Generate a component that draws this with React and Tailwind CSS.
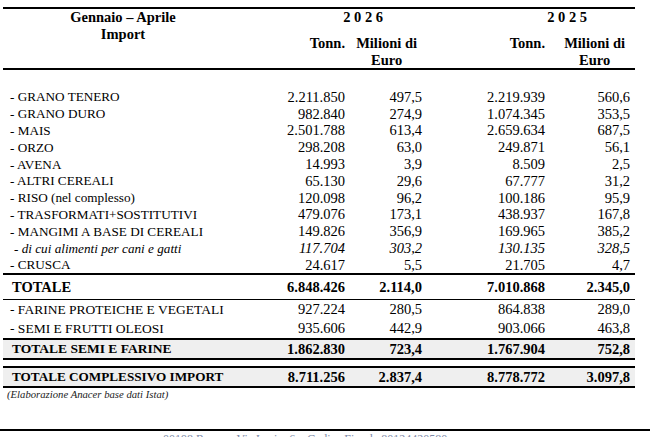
const rows = [
  ['- GRANO TENERO', '2.211.850', '497,5', '2.219.939', '560,6'],
  ['- GRANO DURO', '982.840', '274,9', '1.074.345', '353,5'],
  ['- MAIS', '2.501.788', '613,4', '2.659.634', '687,5'],
  ['- ORZO', '298.208', '63,0', '249.871', '56,1'],
  ['- AVENA', '14.993', '3,9', '8.509', '2,5'],
  ['- ALTRI CEREALI', '65.130', '29,6', '67.777', '31,2'],
  ['- RISO (nel complesso)', '120.098', '96,2', '100.186', '95,9'],
  ['- TRASFORMATI+SOSTITUTIVI', '479.076', '173,1', '438.937', '167,8'],
  ['- MANGIMI A BASE DI CEREALI', '149.826', '356,9', '169.965', '385,2'],
  ['- di cui alimenti per cani e gatti', '117.704', '303,2', '130.135', '328,5', true],
  ['- CRUSCA', '24.617', '5,5', '21.705', '4,7'],
];

const cols = 'grid grid-cols-[251px_91px_77px_123px_90px]';
const numCols = 'col-span-4 grid grid-cols-[91px_77px_123px_90px] text-[14.5px]';

function Nums({ v }) {
  return (
    <>
      <div className="text-right">{v[0]}</div>
      <div className="text-right">{v[1]}</div>
      <div className="text-right">{v[2]}</div>
      <div className="text-right pr-[5px]">{v[3]}</div>
    </>
  );
}

export default function App() {
  return (
    <div className="relative h-[437px] w-[657px] overflow-hidden bg-white text-black font-['Liberation_Serif',serif] pt-[7px]">
      <div className="ml-[3px] w-[632px]">
        {/* intestazione */}
        <div className={`${cols} h-[63px] border-y-2 border-black font-bold text-[14.5px] leading-[17px]`}>
          <div className="w-[240px] text-center">
            Gennaio – Aprile
            <br />
            Import
          </div>
          <div className="col-span-2">
            <div className="text-right pr-[39px]">2 0 2 6</div>
            <div className="mt-[9px] grid grid-cols-[91px_77px]">
              <div className="text-right">Tonn.</div>
              <div className="text-right pr-[5px]">
                <div className="inline-block text-center">Milioni di<br />Euro</div>
              </div>
            </div>
          </div>
          <div className="col-span-2">
            <div className="text-right pr-[48px]">2 0 2 5</div>
            <div className="mt-[9px] grid grid-cols-[123px_90px]">
              <div className="text-right">Tonn.</div>
              <div className="text-right pr-[10px]">
                <div className="inline-block text-center">Milioni di<br />Euro</div>
              </div>
            </div>
          </div>
        </div>

        <div className="h-[18.6px]" />

        {rows.map((r) => (
          <div key={r[0]} className={`${cols} h-[16.8px] items-center leading-none ${r[5] ? 'italic' : ''}`}>
            <div className={`text-[13.2px] ${r[5] ? 'pl-[11px]' : 'pl-[7px]'}`}>{r[0]}</div>
            <div className={numCols}>
              <Nums v={r.slice(1, 5)} />
            </div>
          </div>
        ))}

        <div className={`${cols} h-[26.6px] items-center border-t-2 border-b border-black font-bold text-[14.5px] leading-none`}>
          <div className="pl-[9px]">TOTALE</div>
          <Nums v={['6.848.426', '2.114,0', '7.010.868', '2.345,0']} />
        </div>

        <div className={`${cols} h-[19px] items-center leading-none`}>
          <div className="pl-[7px] text-[13.5px]">- FARINE PROTEICHE E VEGETALI</div>
          <div className={numCols}>
            <Nums v={['927.224', '280,5', '864.838', '289,0']} />
          </div>
        </div>
        <div className={`${cols} h-[19px] items-center leading-none`}>
          <div className="pl-[7px] text-[13.5px]">- SEMI E FRUTTI OLEOSI</div>
          <div className={numCols}>
            <Nums v={['935.606', '442,9', '903.066', '463,8']} />
          </div>
        </div>

        <div className={`${cols} h-[22px] items-center border-y-2 border-black bg-[#efefef] font-bold leading-none`}>
          <div className="pl-[9px] text-[13.5px]">TOTALE SEMI E FARINE</div>
          <div className={numCols}>
            <Nums v={['1.862.830', '723,4', '1.767.904', '752,8']} />
          </div>
        </div>

        <div className="h-[6px]" />

        <div className={`${cols} h-[22px] items-center border-y-2 border-black bg-[#efefef] font-bold leading-none`}>
          <div className="pl-[9px] text-[13.2px]">TOTALE COMPLESSIVO IMPORT</div>
          <div className={numCols}>
            <Nums v={['8.711.256', '2.837,4', '8.778.772', '3.097,8']} />
          </div>
        </div>

        <div className="pl-[4px] h-[12px] text-[10.7px] italic leading-[12px] text-[#222]">
          (Elaborazione Anacer base dati Istat)
        </div>
      </div>

      <div className="mt-[29px] w-[650px] border-t-2 border-black" />
      <div className="pl-[163px] pt-[1px] text-[12px] leading-[14px] text-[#7d8aa6]">
        00198 Roma – Via Lazio, 6 – Codice Fiscale 80124420580
      </div>
    </div>
  );
}
